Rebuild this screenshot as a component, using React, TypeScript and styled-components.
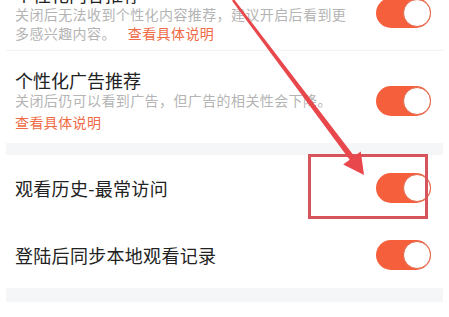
import styled, { createGlobalStyle } from "styled-components";

const GlobalStyle = createGlobalStyle`
  html, body {
    margin: 0;
    padding: 0;
    background: #ffffff;
  }
  body {
    font-family: "Noto Sans CJK SC", "Noto Sans", sans-serif;
  }
`;

const Page = styled.div`
  position: relative;
  width: 449px;
  height: 317px;
  overflow: hidden;
  background: #ffffff;
`;

const Group = styled.div<{ $shift?: number }>`
  margin: ${(p) => p.$shift || 0}px 6px 0;
  background: #ffffff;
`;

const Band = styled.div<{ $h: number }>`
  height: ${(p) => p.$h}px;
  margin: 0 6px;
  background: #f5f6f8;
`;

const Row = styled.div<{ $h?: number; $pt?: number; $pb?: number; $line?: boolean }>`
  display: flex;
  align-items: center;
  justify-content: space-between;
  box-sizing: border-box;
  min-height: ${(p) => (p.$h ? `${p.$h}px` : "auto")};
  padding: ${(p) => p.$pt || 0}px 12px ${(p) => p.$pb || 0}px 9px;
  border-bottom: ${(p) => (p.$line ? "1px solid #f3f3f4" : "none")};
`;

const TextCol = styled.div`
  flex: 1;
  max-width: 335px;
`;

const Title = styled.div`
  font-size: 18px;
  line-height: 22px;
  color: #222222;
`;

const Label = styled.div`
  font-size: 18px;
  color: #222222;
  letter-spacing: 0.3px;
`;

const Desc = styled.div`
  font-size: 14px;
  line-height: 19px;
  color: #b4b4b4;
  letter-spacing: 0.4px;
`;

const More = styled.span<{ $block?: boolean }>`
  display: ${(p) => (p.$block ? "block" : "inline")};
  margin-left: ${(p) => (p.$block ? 0 : 12)}px;
  margin-top: ${(p) => (p.$block ? 3 : 0)}px;
  color: #ef6a45;
`;

const Toggle = styled.div`
  position: relative;
  flex: none;
  width: 55px;
  height: 30px;
  border-radius: 15px;
  background: #f65f3c;
`;

const Knob = styled.div`
  position: absolute;
  top: 1px;
  right: 0;
  width: 28px;
  height: 28px;
  box-sizing: border-box;
  border-radius: 50%;
  border: 1.5px solid #e0684b;
  background: #ffffff;
`;

const Highlight = styled.div`
  position: absolute;
  left: 308px;
  top: 154px;
  width: 120px;
  height: 65px;
  box-sizing: border-box;
  border: 3px solid #d8545d;
`;

const ArrowLayer = styled.svg`
  position: absolute;
  left: 0;
  top: 0;
  pointer-events: none;
`;

function Switch() {
  return (
    <Toggle>
      <Knob />
    </Toggle>
  );
}

export default function App() {
  return (
    <Page>
      <GlobalStyle />
      <Group $shift={-35}>
        <Row $pt={18} $pb={7} $line>
          <TextCol>
            <Title>个性化内容推荐</Title>
            <Desc>
              关闭后无法收到个性化内容推荐，建议开启后看到更多感兴趣内容。
              <More>查看具体说明</More>
            </Desc>
          </TextCol>
          <Switch />
        </Row>
        <Row $pt={18} $pb={11}>
          <TextCol>
            <Title>个性化广告推荐</Title>
            <Desc>
              关闭后仍可以看到广告，但广告的相关性会下降。
              <More $block>查看具体说明</More>
            </Desc>
          </TextCol>
          <Switch />
        </Row>
      </Group>
      <Band $h={12} />
      <Group>
        <Row $h={66.5}>
          <Label>观看历史-最常访问</Label>
          <Switch />
        </Row>
        <Row $h={66.5}>
          <Label>登陆后同步本地观看记录</Label>
          <Switch />
        </Row>
      </Group>
      <Band $h={14} />
      <Highlight />
      <ArrowLayer width="449" height="317" viewBox="0 0 449 317">
        <polygon
          points="234,-0.8 354.3,156.3 360.8,151.5 364,175 343.2,164.5 349.7,159.7 232,0.8"
          fill="#e8474c"
        />
      </ArrowLayer>
    </Page>
  );
}
